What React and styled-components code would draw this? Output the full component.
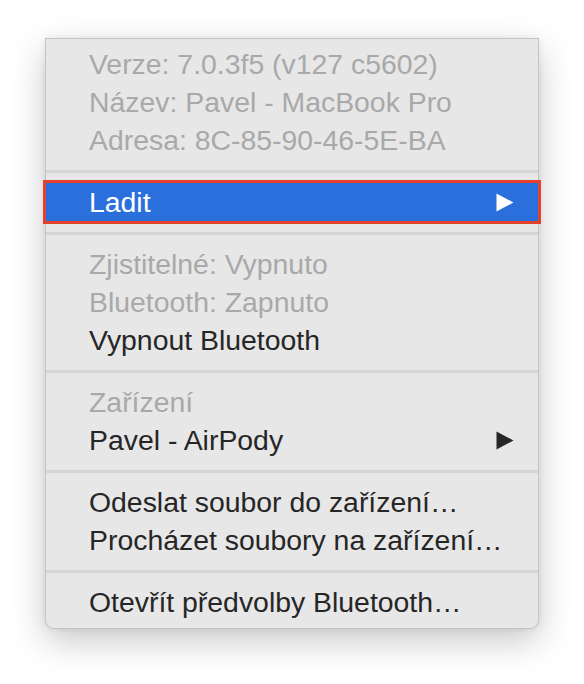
import React from 'react'
import styled, { createGlobalStyle } from 'styled-components';

const GlobalStyle = createGlobalStyle`
  html, body {
    margin: 0;
    padding: 0;
    background: #ffffff;
  }
  body {
    font-family: "Liberation Sans", Arial, sans-serif;
  }
`;

const menuData = [
  { type: 'item', label: 'Verze: 7.0.3f5 (v127 c5602)', disabled: true },
  { type: 'item', label: 'Název: Pavel - MacBook Pro', disabled: true },
  { type: 'item', label: 'Adresa: 8C-85-90-46-5E-BA', disabled: true },
  { type: 'sep' },
  { type: 'item', label: 'Ladit', submenu: true, active: true },
  { type: 'sep' },
  { type: 'item', label: 'Zjistitelné: Vypnuto', disabled: true },
  { type: 'item', label: 'Bluetooth: Zapnuto', disabled: true },
  { type: 'item', label: 'Vypnout Bluetooth' },
  { type: 'sep' },
  { type: 'item', label: 'Zařízení', disabled: true },
  { type: 'item', label: 'Pavel - AirPody', submenu: true },
  { type: 'sep' },
  { type: 'item', label: 'Odeslat soubor do zařízení…' },
  { type: 'item', label: 'Procházet soubory na zařízení…' },
  { type: 'sep' },
  { type: 'item', label: 'Otevřít předvolby Bluetooth…' },
];

const Arrow = () => (
  <svg width="18" height="19" viewBox="0 0 18 19">
    <path d="M0.5 0.5 L17.5 9.5 L0.5 18.5 Z" fill="currentColor" />
  </svg>
);

const App = () => {
  return (
    <Page>
      <GlobalStyle />
      <Menu>
        {menuData.map((entry, index) =>
          entry.type === 'sep' ? (
            <Separator key={index} />
          ) : (
            <Item key={index} disabled={entry.disabled} active={entry.active}>
              <Label>{entry.label}</Label>
              {entry.submenu && <Arrow />}
            </Item>
          )
        )}
      </Menu>
    </Page>
  );
}

export default App;

const Page = styled.div`
  padding: 38px 0 0 45px;
  height: 684px;
  box-sizing: border-box;
`;

const Menu = styled.div`
  width: 494px;
  box-sizing: border-box;
  background-color: #e7e7e7;
  border: 1px solid #c4c4c4;
  border-radius: 0 0 9px 9px;
  padding: 6px 0 7px;
  box-shadow: 0 12px 34px rgba(0, 0, 0, 0.22), 0 0 6px rgba(0, 0, 0, 0.08);
  display: flex;
  flex-direction: column;
`;

const Item = styled.div.withConfig({
  shouldForwardProp: (prop) => !['disabled', 'active'].includes(prop),
})`
  height: 38px;
  display: flex;
  align-items: center;
  justify-content: space-between;
  padding: 0 24px 0 43px;
  font-size: 28.4px;
  line-height: 38px;
  color: ${props => props.active ? '#ffffff' : props.disabled ? '#a9a9a9' : '#262626'};
  background-color: ${props => props.active ? '#2b6fdc' : 'transparent'};
  outline: ${props => props.active ? '3px solid #e4412c' : 'none'};
  white-space: nowrap;
`;

const Label = styled.span`
  display: block;
`;

const Separator = styled.div`
  height: 24px;
  display: flex;
  align-items: center;

  &::after {
    content: '';
    display: block;
    width: 100%;
    height: 3px;
    background-color: #d5d5d5;
  }
`;
